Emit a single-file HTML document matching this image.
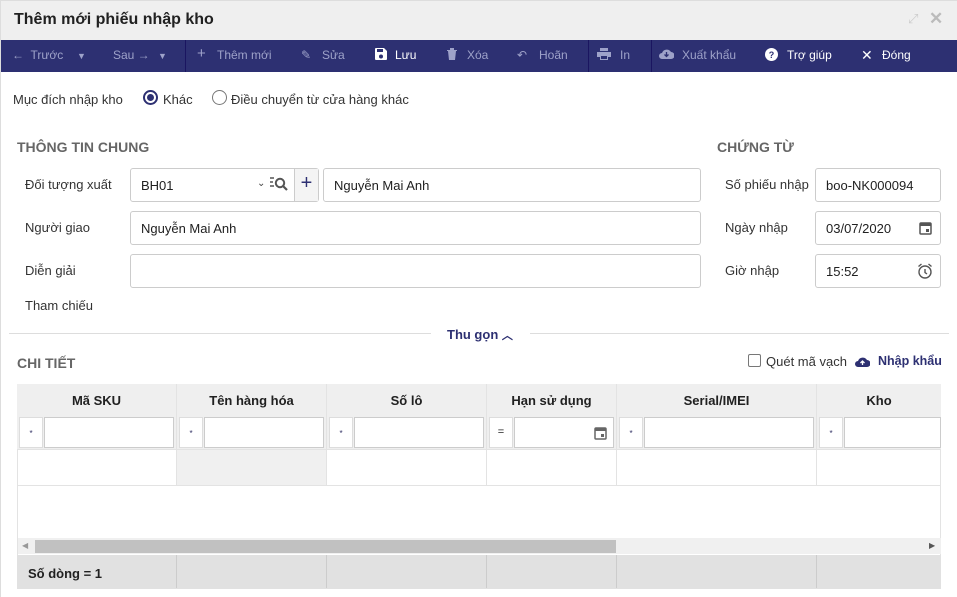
<!DOCTYPE html>
<html><head><meta charset="utf-8"><style>
*{box-sizing:border-box;margin:0;padding:0}
body{width:957px;height:597px;overflow:hidden;background:#fff;font-family:"Liberation Sans",Arial,sans-serif;font-size:13px;color:#212121;position:relative}
.a{position:absolute}
.title{left:0;top:0;width:957px;height:40px;background:#efefef;border-top:1px solid #ddd}
.title b{position:absolute;left:14px;top:10px;font-size:16px;color:#212121}
.tb{left:0;top:40px;width:957px;height:32px;background:#2d3072}
.tb span{position:absolute;top:8px;font-size:12px;color:#9ea2c9;white-space:nowrap}
.tb .w{color:#fff}
.sep{position:absolute;top:0;width:1px;height:32px;background:#1a1560}
.lbl{font-size:13px;color:#333}
.h{font-weight:bold;font-size:14px;color:#666}
.in{border:1px solid #ccc;border-radius:3px;height:34px;background:#fff;padding:9px 10px;font-size:13px}
.cell{position:absolute;border-right:1px solid #e3e3e3}
.hd{top:384px;height:32px;background:#efefef;font-weight:bold;text-align:center;padding-top:9px;font-size:13px}
.f{top:416px;height:33px;background:#efefef}
.f .o{position:absolute;left:2px;top:1px;width:24px;height:31px;background:#fff;border:1px solid #ddd;font-size:8px;color:#336;text-align:center;padding-top:11px}
.f .t{position:absolute;left:27px;top:1px;right:2px;height:31px;background:#fff;border:1px solid #ccc}
</style></head><body>
<div class="a" style="left:0;top:0;width:1px;height:597px;background:#ddd;z-index:5"></div>
<div class="a title"><b>Thêm mới phiếu nhập kho</b>
<span style="position:absolute;left:908px;top:10px;color:#ccc;font-size:13px">⤢</span>
<span style="position:absolute;left:929px;top:8px;color:#bbb;font-size:17px;font-weight:bold">✕</span></div>
<div class="a tb">
<span style="left:12px">←&nbsp; Trước</span><span style="left:77px;font-size:9px;top:11px">▼</span>
<span style="left:113px">Sau →</span><span style="left:158px;font-size:9px;top:11px">▼</span>
<div class="sep" style="left:185px"></div>
<span style="left:197px;font-size:15px;top:5px">+</span><span style="left:217px">Thêm mới</span>
<span style="left:301px">✎</span><span style="left:322px">Sửa</span>
<span class="w" style="left:375px"><svg width="12" height="12" viewBox="0 0 12 12"><path d="M0 1v10a1 1 0 001 1h10a1 1 0 001-1V3L9 0H1a1 1 0 00-1 1zM2 1h6v3H2zM6 6.5a2 2 0 110 4 2 2 0 010-4z" fill="#fff" fill-rule="evenodd"/></svg></span><span class="w" style="left:395px">Lưu</span>
<span style="left:447px"><svg width="10" height="12"><path d="M0 2h10v1H0zM3 0h4v2H3zM1 3h8l-1 9H2z" fill="#9ea2c9"/></svg></span><span style="left:467px">Xóa</span>
<span style="left:517px">↶</span><span style="left:539px">Hoãn</span>
<div class="sep" style="left:588px"></div>
<span style="left:597px"><svg width="14" height="12"><path d="M3 0h8v3H3zM0 4h14v5h-3v3H3V9H0z" fill="#9ea2c9"/><rect x="4" y="8" width="6" height="3" fill="#2d3072"/></svg></span><span style="left:620px">In</span>
<div class="sep" style="left:651px"></div>
<span style="left:659px"><svg width="15" height="11"><path d="M3 11a3 3 0 010-6 5 5 0 019-1 3.5 3.5 0 010 7z" fill="#9ea2c9"/><path d="M7.5 4v4M5.5 6.5l2 2 2-2" stroke="#2d3072" stroke-width="1.3" fill="none"/></svg></span><span style="left:682px">Xuất khẩu</span>
<span class="w" style="left:765px"><svg width="13" height="13"><circle cx="6.5" cy="6.5" r="6.5" fill="#fff"/><text x="6.5" y="10" font-size="9" font-weight="bold" text-anchor="middle" fill="#2d3072" font-family="Liberation Sans">?</text></svg></span><span class="w" style="left:787px">Trợ giúp</span>
<span class="w" style="left:861px;font-size:14px;top:7px">✕</span><span class="w" style="left:882px">Đóng</span>
</div>

<div class="a lbl" style="left:13px;top:92px">Mục đích nhập kho</div>
<div class="a" style="left:143px;top:90px;width:15px;height:15px;border:2px solid #2d3072;border-radius:50%"><div style="margin:2px;width:7px;height:7px;border-radius:50%;background:#2d3072"></div></div>
<div class="a lbl" style="left:163px;top:92px">Khác</div>
<div class="a" style="left:212px;top:90px;width:15px;height:15px;border:1.5px solid #777;border-radius:50%"></div>
<div class="a lbl" style="left:231px;top:92px">Điều chuyển từ cửa hàng khác</div>

<div class="a h" style="left:17px;top:139px">THÔNG TIN CHUNG</div>
<div class="a h" style="left:717px;top:139px">CHỨNG TỪ</div>

<div class="a lbl" style="left:25px;top:177px">Đối tượng xuất</div>
<div class="a in" style="left:130px;top:168px;width:189px">BH01</div>
<div class="a" style="left:257px;top:178px;font-size:10px;color:#444">⌄</div>
<div class="a" style="left:270px;top:176px"><svg width="20" height="16"><path d="M0 2h4M0 6h3M0 10h4" stroke="#555" stroke-width="1.5"/><circle cx="10" cy="7" r="4.2" stroke="#555" stroke-width="2" fill="none"/><path d="M13 10l4 4" stroke="#555" stroke-width="2.2"/></svg></div>
<div class="a" style="left:294px;top:169px;width:24px;height:32px;background:#f4f4f4;border-left:1px solid #ccc;text-align:center;font-size:20px;color:#2d3072;line-height:28px">+</div>
<div class="a in" style="left:323px;top:168px;width:378px">Nguyễn Mai Anh</div>

<div class="a lbl" style="left:25px;top:220px">Người giao</div>
<div class="a in" style="left:130px;top:211px;width:571px">Nguyễn Mai Anh</div>
<div class="a lbl" style="left:25px;top:263px">Diễn giải</div>
<div class="a in" style="left:130px;top:254px;width:571px"></div>
<div class="a lbl" style="left:25px;top:298px">Tham chiếu</div>

<div class="a lbl" style="left:725px;top:177px">Số phiếu nhập</div>
<div class="a in" style="left:815px;top:168px;width:126px">boo-NK000094</div>
<div class="a lbl" style="left:725px;top:220px">Ngày nhập</div>
<div class="a in" style="left:815px;top:211px;width:126px">03/07/2020</div>
<div class="a" style="left:919px;top:221px"><svg width="13" height="14"><rect x="1" y="2" width="11" height="11" rx="1" stroke="#555" stroke-width="1.5" fill="none"/><rect x="1" y="2" width="11" height="3" fill="#555"/><rect x="7" y="8" width="3" height="3" fill="#555"/></svg></div>
<div class="a lbl" style="left:725px;top:263px">Giờ nhập</div>
<div class="a in" style="left:815px;top:254px;width:126px">15:52</div>
<div class="a" style="left:917px;top:263px"><svg width="16" height="16"><circle cx="8" cy="9" r="6" stroke="#555" stroke-width="1.4" fill="none"/><path d="M8 6v3.5l2 1.5M1.5 3.5l3-2.5M14.5 3.5l-3-2.5" stroke="#555" stroke-width="1.4" fill="none"/></svg></div>

<div class="a" style="left:9px;top:333px;width:422px;height:1px;background:#ddd"></div>
<div class="a" style="left:447px;top:327px;font-weight:bold;color:#2d3072;font-size:13px">Thu gọn <span style="font-size:11px">︿</span></div>
<div class="a" style="left:530px;top:333px;width:419px;height:1px;background:#ddd"></div>

<div class="a h" style="left:17px;top:355px">CHI TIẾT</div>
<div class="a" style="left:748px;top:354px;width:13px;height:13px;border:1.5px solid #777;border-radius:2px"></div>
<div class="a lbl" style="left:766px;top:354px">Quét mã vạch</div>
<div class="a" style="left:855px;top:355px"><svg width="15" height="11"><path d="M3 11a3 3 0 010-6 5 5 0 019-1 3.5 3.5 0 010 7z" fill="#2d3072"/><path d="M7.5 9V5M5.5 7l2-2 2 2" stroke="#fff" stroke-width="1.3" fill="none"/></svg></div>
<div class="a" style="left:878px;top:354px;font-weight:bold;color:#2d3072;font-size:12.5px">Nhập khẩu</div>

<div class="a" style="left:17px;top:384px;width:924px;height:205px;border:1px solid #e3e3e3;background:#fff"></div>
<div class="cell hd" style="left:17px;width:160px">Mã SKU</div>
<div class="cell hd" style="left:177px;width:150px">Tên hàng hóa</div>
<div class="cell hd" style="left:327px;width:160px">Số lô</div>
<div class="cell hd" style="left:487px;width:130px">Hạn sử dụng</div>
<div class="cell hd" style="left:617px;width:200px">Serial/IMEI</div>
<div class="cell hd" style="left:817px;width:124px;border-right:none">Kho</div>
<div class="cell f" style="left:17px;width:160px"><div class="o">*</div><div class="t"></div></div>
<div class="cell f" style="left:177px;width:150px"><div class="o">*</div><div class="t"></div></div>
<div class="cell f" style="left:327px;width:160px"><div class="o">*</div><div class="t"></div></div>
<div class="cell f" style="left:487px;width:130px"><div class="o" style="font-size:11px;padding-top:8px;color:#222">=</div><div class="t"></div>
<svg style="position:absolute;left:107px;top:10px" width="13" height="14"><rect x="1" y="2" width="11" height="11" rx="1" stroke="#666" stroke-width="1.5" fill="none"/><rect x="1" y="2" width="11" height="3" fill="#666"/><rect x="7" y="8" width="3" height="3" fill="#666"/></svg></div>
<div class="cell f" style="left:617px;width:200px"><div class="o">*</div><div class="t"></div></div>
<div class="cell f" style="left:817px;width:124px;border-right:none"><div class="o">*</div><div class="t" style="right:0"></div></div>
<div class="a" style="left:17px;top:449px;width:924px;height:1px;background:#e3e3e3"></div>
<div class="cell" style="left:17px;top:450px;width:160px;height:36px"></div>
<div class="cell" style="left:177px;top:450px;width:150px;height:36px;background:#f0f0f0"></div>
<div class="cell" style="left:327px;top:450px;width:160px;height:36px"></div>
<div class="cell" style="left:487px;top:450px;width:130px;height:36px"></div>
<div class="cell" style="left:617px;top:450px;width:200px;height:36px"></div>
<div class="a" style="left:17px;top:485px;width:924px;height:1px;background:#e3e3e3"></div>
<div class="a" style="left:18px;top:538px;width:923px;height:16px;background:#f0f0f0"></div>
<div class="a" style="left:35px;top:540px;width:581px;height:13px;background:#c1c1c1"></div>
<div class="a" style="left:22px;top:541px;font-size:8px;color:#999">◀</div>
<div class="a" style="left:929px;top:541px;font-size:8px;color:#555">▶</div>
<div class="a" style="left:17px;top:555px;width:924px;height:34px;background:#e1e1e1"></div>
<div class="cell" style="left:17px;top:555px;width:160px;height:33px;border-color:#ccc;font-weight:bold;padding:11px 0 0 11px">Số dòng = 1</div>
<div class="cell" style="left:177px;top:555px;width:150px;height:33px;border-color:#ccc"></div>
<div class="cell" style="left:327px;top:555px;width:160px;height:33px;border-color:#ccc"></div>
<div class="cell" style="left:487px;top:555px;width:130px;height:33px;border-color:#ccc"></div>
<div class="cell" style="left:617px;top:555px;width:200px;height:33px;border-color:#ccc"></div>
</body></html>
